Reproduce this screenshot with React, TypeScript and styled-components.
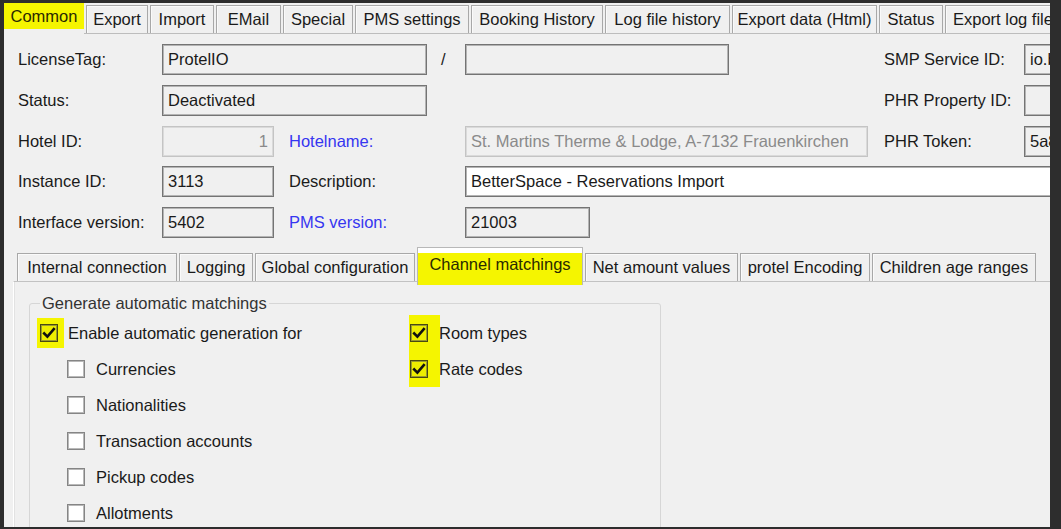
import React from 'react';
import styled, { createGlobalStyle, css } from 'styled-components';

const Global = createGlobalStyle`
  html, body { margin: 0; padding: 0; background: #2d2d2d; }
  body { font-family: "Liberation Sans", Arial, sans-serif; }
`;

const Frame = styled.div`
  width: 1061px;
  height: 529px;
  box-sizing: border-box;
  padding: 3px 11px 2px 4px;
  background: #2d2d2d;
`;

const Window = styled.div`
  width: 100%;
  height: 100%;
  background: #f0f0f0;
  overflow: hidden;
  display: flex;
  flex-direction: column;
  font-size: 16.5px;
  color: #1a1a1a;
`;

const TopTabStrip = styled.div`
  display: flex;
  align-items: flex-end;
  height: 30px;
  flex-shrink: 0;
  border-bottom: 1px solid #bdbdbd;
`;

const TopTab = styled.div<{ $w: number; $selected?: boolean; $start?: boolean }>`
  flex: 0 0 auto;
  width: ${p => p.$w}px;
  margin-right: 2px;
  box-sizing: border-box;
  height: 28px;
  display: flex;
  align-items: center;
  justify-content: ${p => (p.$start ? 'flex-start' : 'center')};
  padding-left: ${p => (p.$start ? 7 : 0)}px;
  white-space: nowrap;
  overflow: hidden;
  border: 1px solid #a8a8a8;
  border-bottom: none;
  background: #f0f0f0;
  box-shadow: inset 1px 1px 0 #fafafa;
  ${p =>
    p.$selected &&
    css`
      height: 31px;
      margin-bottom: -1px;
      border: none;
      box-shadow: none;
      padding-bottom: 4px;
      background: linear-gradient(#f5f500 0 26px, #f0f0f0 26px);
      color: #2a2a00;
    `}
`;

const Form = styled.div`
  display: grid;
  grid-template-columns: 144px 112px 15px 138px 38px 125px 139px 139px 16px 140px 70px;
  grid-template-rows: repeat(5, 31px);
  row-gap: 9.75px;
  padding: 10px 0 0 14px;
  flex-shrink: 0;
`;

const Label = styled.div<{ $col: string; $row: number; $blue?: boolean }>`
  grid-column: ${p => p.$col};
  grid-row: ${p => p.$row};
  display: flex;
  align-items: center;
  white-space: nowrap;
  color: ${p => (p.$blue ? '#3636f0' : '#1a1a1a')};
`;

const Slash = styled.div<{ $row: number }>`
  grid-column: 5;
  grid-row: ${p => p.$row};
  display: flex;
  align-items: center;
  padding-left: 14px;
`;

type Variant = 'readonly' | 'disabled' | 'white';

const Field = styled.div<{ $col: string; $row: number; $variant?: Variant; $right?: boolean }>`
  grid-column: ${p => p.$col};
  grid-row: ${p => p.$row};
  box-sizing: border-box;
  height: 31px;
  display: flex;
  align-items: center;
  justify-content: ${p => (p.$right ? 'flex-end' : 'flex-start')};
  padding: 0 5px;
  white-space: nowrap;
  overflow: hidden;
  border: 1px solid #747474;
  box-shadow: inset 0 0 0 1px #b4b4b4;
  background: #f0f0f0;
  ${p =>
    p.$variant === 'disabled' &&
    css`
      border-color: #c4c4c4;
      box-shadow: inset 0 0 0 1px #dadada;
      color: #8a8a8a;
    `}
  ${p =>
    p.$variant === 'white' &&
    css`
      background: #ffffff;
    `}
`;

const InnerControl = styled.div`
  margin: 9px 0 0 9px;
  flex: 1;
  display: flex;
  flex-direction: column;
  min-height: 0;
`;

const InnerTabStrip = styled.div`
  display: flex;
  align-items: flex-end;
  height: 34px;
  padding-left: 4px;
  flex-shrink: 0;
`;

const InnerTab = styled.div<{ $w: number; $selected?: boolean }>`
  flex: 0 0 auto;
  width: ${p => p.$w}px;
  margin-right: 2px;
  box-sizing: border-box;
  height: 28px;
  display: flex;
  align-items: center;
  justify-content: center;
  white-space: nowrap;
  overflow: hidden;
  border: 1px solid #a8a8a8;
  border-bottom: none;
  background: #f0f0f0;
  box-shadow: inset 1px 1px 0 #fafafa;
  ${p =>
    p.$selected &&
    css`
      position: relative;
      z-index: 1;
      height: 38px;
      margin: 0 2px -4px 0;
      padding: 6px 0 10px;
      border-color: #b8b8b8;
      box-shadow: none;
      background: linear-gradient(#ffffff 0 5px, #f5f500 5px);
      color: #2a2a00;
    `}
`;

const Panel = styled.div`
  flex: 1;
  border-top: 1px solid #c2c2c2;
  border-left: 1px solid #ffffff;
  box-shadow: inset 1px 0 0 #e2e2e2;
  padding-left: 15px;
`;

const GroupBox = styled.fieldset`
  margin: 12px 0 0 0;
  width: 632px;
  height: 300px;
  box-sizing: border-box;
  padding: 3px 0 0 10px;
  border: 1px solid #d6d6d6;
  border-radius: 3px;
  min-width: 0;
`;

const Legend = styled.legend`
  padding: 0 2px;
  line-height: 18px;
  font-size: 16.5px;
  color: #333;
`;

const GroupGrid = styled.div`
  display: grid;
  grid-template-columns: 369px auto;
`;

const Column = styled.div`
  display: flex;
  flex-direction: column;
`;

const CheckRow = styled.div<{ $indent?: number }>`
  display: flex;
  align-items: center;
  height: 36px;
  padding-left: ${p => p.$indent ?? 0}px;
  white-space: nowrap;
`;

const Marker = styled.div<{ $pad: string; $shift?: number; $tall?: boolean }>`
  display: flex;
  align-items: center;
  align-self: ${p => (p.$tall ? 'stretch' : 'center')};
  padding: ${p => p.$pad};
  margin-left: ${p => p.$shift ?? 0}px;
  background: #f5f500;
`;

const Box = styled.div<{ $checked?: boolean }>`
  width: 18px;
  height: 18px;
  box-sizing: border-box;
  flex-shrink: 0;
  display: flex;
  align-items: center;
  justify-content: center;
  border: 1px solid #858585;
  box-shadow: inset 0 0 0 1px #b9b9b9;
  background: #ffffff;
  ${p =>
    p.$checked &&
    css`
      border-color: #4a4a10;
      box-shadow: inset 0 0 0 1px #9a9a30;
      background: #eeee00;
    `}
`;

const CheckText = styled.span<{ $gap: number }>`
  margin-left: ${p => p.$gap}px;
`;

const Tick = () => (
  <svg width="14" height="14" viewBox="0 0 14 14">
    <path d="M2.2 7.4 L5.4 10.6 L11.8 3.2" fill="none" stroke="#111" strokeWidth="2.6" strokeLinecap="square" />
  </svg>
);

const topTabs: [string, number][] = [
  ['Common', 80],
  ['Export', 62],
  ['Import', 64],
  ['EMail', 65],
  ['Special', 70],
  ['PMS settings', 114],
  ['Booking History', 132],
  ['Log file history', 125],
  ['Export data (Html)', 145],
  ['Status', 64],
  ['Export log file', 120],
];

const innerTabs: [string, number][] = [
  ['Internal connection', 160],
  ['Logging', 74],
  ['Global configuration', 160],
  ['Channel matchings', 166],
  ['Net amount values', 153],
  ['protel Encoding', 130],
  ['Children age ranges', 164],
];

const subItems = ['Currencies', 'Nationalities', 'Transaction accounts', 'Pickup codes', 'Allotments'];

export default function App() {
  return (
    <>
      <Global />
      <Frame>
        <Window>
          <TopTabStrip>
            {topTabs.map(([t, w], i) => (
              <TopTab key={t} $w={w} $selected={i === 0} $start={i === topTabs.length - 1}>
                {t}
              </TopTab>
            ))}
          </TopTabStrip>

          <Form>
            <Label $col="1" $row={1}>LicenseTag:</Label>
            <Field $col="2 / 5" $row={1}>ProtelIO</Field>
            <Slash $row={1}>/</Slash>
            <Field $col="6 / 8" $row={1} />
            <Label $col="10" $row={1}>SMP Service ID:</Label>
            <Field $col="11" $row={1}>io.bs</Field>

            <Label $col="1" $row={2}>Status:</Label>
            <Field $col="2 / 5" $row={2}>Deactivated</Field>
            <Label $col="10" $row={2}>PHR Property ID:</Label>
            <Field $col="11" $row={2} />

            <Label $col="1" $row={3}>Hotel ID:</Label>
            <Field $col="2" $row={3} $variant="disabled" $right>1</Field>
            <Label $col="4 / 6" $row={3} $blue>Hotelname:</Label>
            <Field $col="6 / 9" $row={3} $variant="disabled">St. Martins Therme &amp; Lodge, A-7132 Frauenkirchen</Field>
            <Label $col="10" $row={3}>PHR Token:</Label>
            <Field $col="11" $row={3}>5a8</Field>

            <Label $col="1" $row={4}>Instance ID:</Label>
            <Field $col="2" $row={4}>3113</Field>
            <Label $col="4 / 6" $row={4}>Description:</Label>
            <Field $col="6 / 12" $row={4} $variant="white">BetterSpace - Reservations Import</Field>

            <Label $col="1" $row={5}>Interface version:</Label>
            <Field $col="2" $row={5}>5402</Field>
            <Label $col="4 / 6" $row={5} $blue>PMS version:</Label>
            <Field $col="6" $row={5}>21003</Field>
          </Form>

          <InnerControl>
            <InnerTabStrip>
              {innerTabs.map(([t, w], i) => (
                <InnerTab key={t} $w={w} $selected={i === 3}>
                  {t}
                </InnerTab>
              ))}
            </InnerTabStrip>
            <Panel>
              <GroupBox>
                <Legend>Generate automatic matchings</Legend>
                <GroupGrid>
                  <Column>
                    <CheckRow>
                      <Marker $pad="6px 6px 6px 3px" $shift={-3}>
                        <Box $checked>
                          <Tick />
                        </Box>
                      </Marker>
                      <CheckText $gap={4}>Enable automatic generation for</CheckText>
                    </CheckRow>
                    {subItems.map(s => (
                      <CheckRow key={s} $indent={27}>
                        <Box />
                        <CheckText $gap={11}>{s}</CheckText>
                      </CheckRow>
                    ))}
                  </Column>
                  <Column>
                    {['Room types', 'Rate codes'].map(s => (
                      <CheckRow key={s}>
                        <Marker $pad="0 12px 0 1px" $tall>
                          <Box $checked>
                            <Tick />
                          </Box>
                        </Marker>
                        <CheckText $gap={-1}>{s}</CheckText>
                      </CheckRow>
                    ))}
                  </Column>
                </GroupGrid>
              </GroupBox>
            </Panel>
          </InnerControl>
        </Window>
      </Frame>
    </>
  );
}
